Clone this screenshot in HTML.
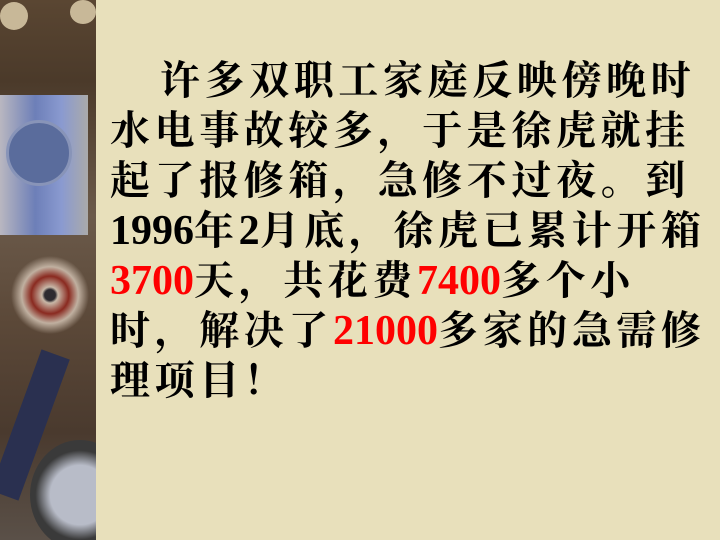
<!DOCTYPE html>
<html><head><meta charset="utf-8"><style>
html,body{margin:0;padding:0}
body{width:720px;height:540px;background:#e8e0bb;position:relative;overflow:hidden}
.img{position:absolute;left:0;top:0;width:96px;height:540px;overflow:hidden;background:linear-gradient(180deg,#5a4632 0%,#4b3a2a 15%,#6b5a4a 40%,#5b4838 60%,#4a3a2e 80%,#5a5048 100%)}
.t{position:absolute;left:110px;font:bold 40px/50px "Liberation Serif","Noto Serif CJK SC",serif;letter-spacing:4.6px;white-space:nowrap;color:#000}
.d{letter-spacing:0;font-size:42px}
.r{color:#f00;letter-spacing:0;font-size:42px}
</style></head><body>
<div class="img">
<div style="position:absolute;left:0;top:95px;width:88px;height:140px;background:linear-gradient(90deg,#b9b7c0,#6d7fb8 40%,#8a9ad0 70%,#aaa)"></div>
<div style="position:absolute;left:6px;top:120px;width:60px;height:60px;border-radius:50%;background:#5a6c9c;border:3px solid #8894b8"></div>
<div style="position:absolute;left:5px;top:245px;width:90px;height:100px;background:radial-gradient(circle,#2d2a30 8%,#c8b8a8 12%,#8a2a20 28%,#c0b0a0 42%,transparent 58%)"></div>
<div style="position:absolute;left:15px;top:350px;width:30px;height:150px;background:#2a3050;transform:rotate(20deg)"></div>
<div style="position:absolute;left:30px;top:440px;width:100px;height:110px;border-radius:50%;background:radial-gradient(circle,#b8bcc8 40%,#3a3a3a 60%)"></div>
<div style="position:absolute;left:0;top:2px;width:28px;height:28px;border-radius:50%;background:#c8b898"></div>
<div style="position:absolute;left:70px;top:0;width:26px;height:24px;border-radius:50%;background:#c8b898"></div>
</div>
<div class="t" style="top:56px;left:160px">许多双职工家庭反映傍晚时</div>
<div class="t" style="top:106px">水电事故较多，于是徐虎就挂</div>
<div class="t" style="top:156px">起了报修箱，急修不过夜。到</div>
<div class="t" style="top:206px"><span class="d">1996</span>年<span class="d">2</span>月底，徐虎已累计开箱</div>
<div class="t" style="top:256px"><span class="r">3700</span>天，共花费<span class="r">7400</span>多个小</div>
<div class="t" style="top:306px">时，解决了<span class="r">21000</span>多家的急需修</div>
<div class="t" style="top:356px">理项目！</div>
</body></html>
